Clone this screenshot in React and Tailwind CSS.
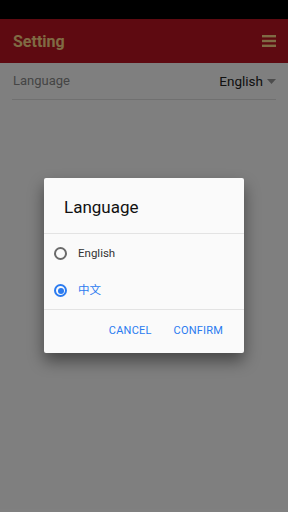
export default function App() {
  return (
    <div className="relative w-[288px] h-[512px] bg-white overflow-hidden" style={{ fontFamily: 'Roboto, "Noto Sans CJK SC", sans-serif' }}>
      <div className="h-[19px] bg-black" />
      <div className="h-[44px] bg-[#bd1422] flex items-center justify-between pl-[13px] pr-[12px]">
        <span className="text-[16px] font-bold text-[#ffd688] pt-[1px]">Setting</span>
        <svg width="14" height="12" viewBox="0 0 14 12">
          <rect x="0" y="0" width="14" height="2.4" fill="#ffd688" />
          <rect x="0" y="4.8" width="14" height="2.4" fill="#ffd688" />
          <rect x="0" y="9.6" width="14" height="2.4" fill="#ffd688" />
        </svg>
      </div>
      <div className="mx-[12px] h-[37px] flex items-center justify-between border-b border-[#e0e0e0]">
        <span className="text-[13px] text-[#8a8a8a] pl-px">Language</span>
        <span className="flex items-center gap-[4px] text-[13.5px] text-[#222]">
          English
          <svg width="9" height="5" viewBox="0 0 9 5"><path d="M0 0h9L4.5 5z" fill="#999" /></svg>
        </span>
      </div>
      <div className="absolute inset-0 bg-black/50 flex items-start justify-center">
        <div className="mt-[178px] w-[200px] bg-[#fafafa] rounded-[2px] shadow-[0_8px_16px_rgba(0,0,0,0.45)]">
          <div className="h-[56px] flex items-center pl-[20px] pt-[4px] border-b border-[#e3e3e3]">
            <span className="text-[17px] text-[#111]">Language</span>
          </div>
          <div className="flex flex-col pt-[1px]">
            <div className="h-[37px] flex items-center pl-[10px]">
              <span className="w-[13px] h-[13px] rounded-full border-[2px] border-[#6a6a6a]" />
              <span className="ml-[11px] text-[11.5px] text-[#333]">English</span>
            </div>
            <div className="h-[37px] flex items-center pl-[10px]">
              <span className="w-[13px] h-[13px] rounded-full border-[2px] border-[#2b7bf0] flex items-center justify-center">
                <span className="w-[6px] h-[6px] rounded-full bg-[#2b7bf0]" />
              </span>
              <span className="ml-[11px] text-[11.5px] text-[#2b7bf0]">中文</span>
            </div>
          </div>
          <div className="border-t border-[#e3e3e3] h-[44px] flex items-center justify-end pr-[21px] gap-[22px]">
            <span className="text-[11px] text-[#2b7bf0] tracking-[0.2px]">CANCEL</span>
            <span className="text-[11px] text-[#2b7bf0] tracking-[0.2px]">CONFIRM</span>
          </div>
        </div>
      </div>
    </div>
  );
}
